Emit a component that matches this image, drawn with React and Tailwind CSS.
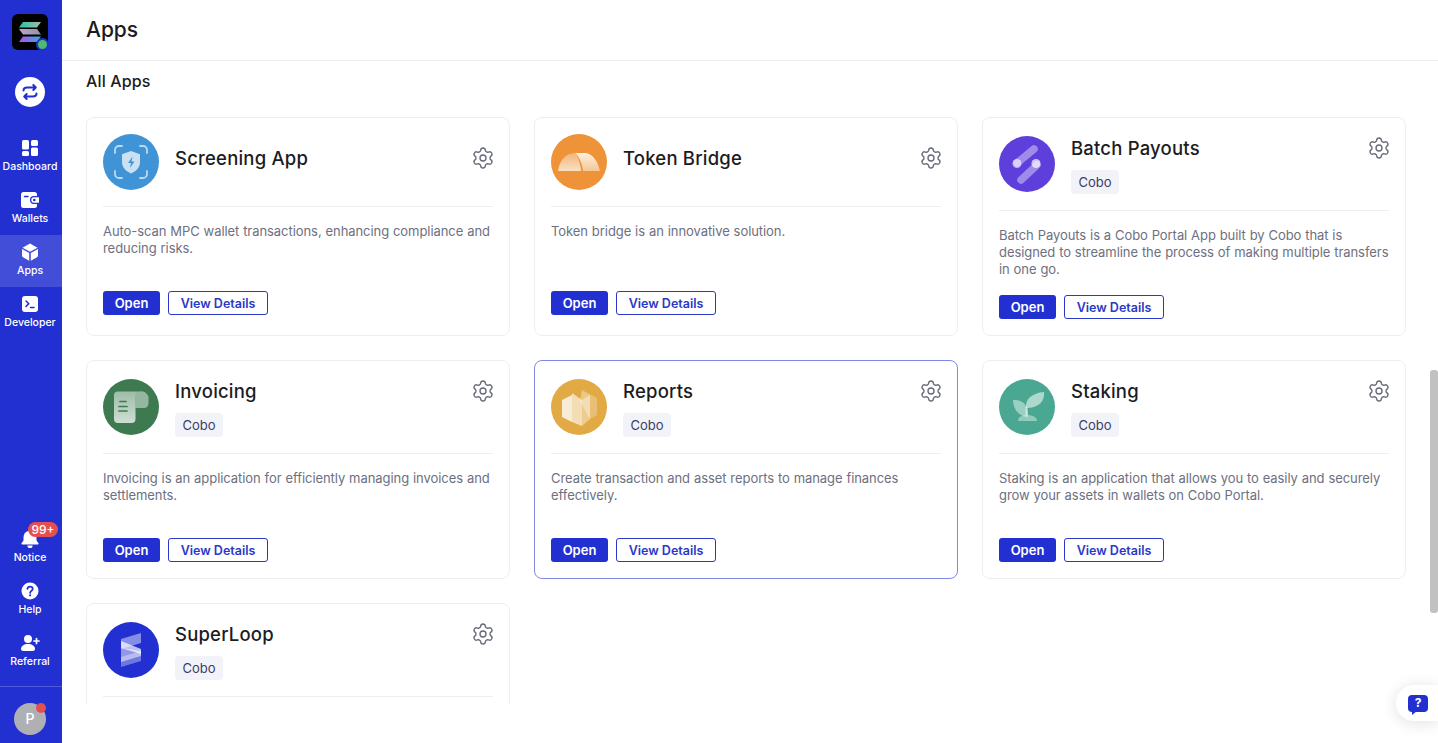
import React from "react";
import { Settings } from "lucide-react";

const Circle = ({ bg, children }) => (
  <div className={`w-14 h-14 rounded-full shrink-0 ${bg}`}>
    <svg viewBox="0 0 56 56" className="w-14 h-14" fill="none">{children}</svg>
  </div>
);

const ScreeningLogo = () => (
  <Circle bg="bg-[#4094d6]">
    <g stroke="#fff" strokeOpacity=".65" strokeWidth="1.8" strokeLinecap="round" fill="none">
      <path d="M12 19v-3a4 4 0 0 1 4-4h3" />
      <path d="M37 12h3a4 4 0 0 1 4 4v3" />
      <path d="M44 37v3a4 4 0 0 1-4 4h-3" />
      <path d="M19 44h-3a4 4 0 0 1-4-4v-3" />
    </g>
    <path d="M28 17l9 3.2v7.6c0 6-4 9.6-9 11.7-5-2.1-9-5.700-9-11.700v-7.600z" fill="#fff" fillOpacity=".72" />
    <path d="M29.500 22.500l-4.500 6.500h3l-1 5 4.500-6.500h-3z" fill="#4094d6" />
  </Circle>
);

const BridgeLogo = () => (
  <Circle bg="bg-[#ee9338]">
    <defs>
      <linearGradient id="br1" x1="0" y1="0" x2="0" y2="1">
        <stop offset="0" stopColor="#f4b47c" />
        <stop offset="1" stopColor="#fae0c2" />
      </linearGradient>
      <linearGradient id="br2" x1="0" y1="0" x2="0" y2="1">
        <stop offset="0" stopColor="#fdf0e0" />
        <stop offset="1" stopColor="#f6c794" />
      </linearGradient>
    </defs>
    <path d="M7 37C8 28 14 19 24 19c3 3 5.500 11 6 18z" fill="url(#br1)" />
    <path d="M24 19h11c7 1 12 9 14 18H32c-1-8-4-15-8-18z" fill="url(#br2)" />
  </Circle>
);

const BatchLogo = () => (
  <Circle bg="bg-[#5f3fdc]">
    <path d="M18 27L35 13" stroke="#fff" strokeOpacity=".4" strokeWidth="7.500" strokeLinecap="round" />
    <path d="M22 44L38 29" stroke="#fff" strokeOpacity=".4" strokeWidth="7.500" strokeLinecap="round" />
    <circle cx="18" cy="27.500" r="4.500" fill="#fff" fillOpacity=".6" />
    <circle cx="37" cy="27.500" r="4.500" fill="#fff" fillOpacity=".7" />
  </Circle>
);

const InvoiceLogo = () => (
  <Circle bg="bg-[#3e7a50]">
    <defs>
      <linearGradient id="inv" x1="0" y1="0" x2="0" y2="1">
        <stop offset="0" stopColor="#fff" stopOpacity=".5" />
        <stop offset="1" stopColor="#fff" stopOpacity=".75" />
      </linearGradient>
    </defs>
    <path d="M15 12.500h21c-3 1-3.500 3-3.500 6V40a4 4 0 0 1-4 4H15a4 4 0 0 1-4-4V16.500a4 4 0 0 1 4-4z" fill="url(#inv)" />
    <path d="M36 12.500a9 9 0 0 1 9.500 5v7a4.500 4.500 0 0 1-4.500 4.500h-8.500V18c0-3 1-4.500 3.500-5.500z" fill="#fff" fillOpacity=".45" />
    <path d="M17 22.500h6M16 27.500h8M16 32h8" stroke="#3e7a50" strokeWidth="1.700" strokeLinecap="round" />
  </Circle>
);

const ReportsLogo = () => (
  <Circle bg="bg-[#e2aa45]">
    <path d="M31 11l15 8v17l-7 4V16z" fill="#fff" fillOpacity=".25" />
    <path d="M29 22l2-11 8 5v24z" fill="#fff" fillOpacity=".35" />
    <path d="M21 14l10 7v26l-10-4z" fill="#fff" fillOpacity=".6" />
    <path d="M31 21l8-5v24l-8 7z" fill="#fff" fillOpacity=".4" />
    <path d="M11 21l10-5v27l-10-5z" fill="#fff" fillOpacity=".78" />
  </Circle>
);

const StakingLogo = () => (
  <Circle bg="bg-[#4aa892]">
    <path d="M27 29c-1-9 6-15 18-16 1 9-5 16-18 16z" fill="#fff" fillOpacity=".55" />
    <path d="M29 38c1-10-4-18-15-17 0 9 6 17 15 17z" fill="#fff" fillOpacity=".45" />
    <path d="M27.500 28v8" stroke="#fff" strokeOpacity=".5" strokeWidth="2" />
    <path d="M19 42c0-4 4-6 9-6s10 2 10 6z" fill="#fff" fillOpacity=".4" />
  </Circle>
);

const LoopLogo = () => (
  <Circle bg="bg-[#2230d2]">
    <path d="M18 17l20-6v10L18 27z" fill="#fff" fillOpacity=".45" />
    <path d="M18 19l20 8v5L18 26z" fill="#fff" fillOpacity=".7" />
    <path d="M18 26l20 3v5L18 40z" fill="#fff" fillOpacity=".5" />
    <path d="M18 35l20-6v10l-20 6z" fill="#fff" fillOpacity=".35" />
  </Circle>
);

const apps = [
  { name: "Screening App", logo: ScreeningLogo, desc: "Auto-scan MPC wallet transactions, enhancing compliance and reducing risks." },
  { name: "Token Bridge", logo: BridgeLogo, desc: "Token bridge is an innovative solution." },
  { name: "Batch Payouts", logo: BatchLogo, tag: true, desc: "Batch Payouts is a Cobo Portal App built by Cobo that is designed to streamline the process of making multiple transfers in one go." },
  { name: "Invoicing", logo: InvoiceLogo, tag: true, desc: "Invoicing is an application for efficiently managing invoices and settlements." },
  { name: "Reports", logo: ReportsLogo, tag: true, hover: true, desc: "Create transaction and asset reports to manage finances effectively." },
  { name: "Staking", logo: StakingLogo, tag: true, desc: "Staking is an application that allows you to easily and securely grow your assets in wallets on Cobo Portal." },
  { name: "SuperLoop", logo: LoopLogo, tag: true, clipped: true },
];

const Card = ({ app }) => {
  const Logo = app.logo;
  return (
    <div className={`min-h-[219px] rounded-lg border bg-white px-4 pt-4 pb-4 ${app.hover ? "border-[#8089e2]" : "border-[#eceef2]"}`}>
      <div className="flex items-center gap-4 border-b border-[#eceef2] pb-4">
        <Logo />
        <div className="flex-1 min-w-0">
          <div className="flex h-7 items-center justify-between mb-2">
            <span className="text-[18.500px] font-medium leading-7 text-[#1b1c21] tracking-[0.2px]">{app.name}</span>
            <Settings size={24} strokeWidth={1.35} className="-mr-[2px] text-[#666a79]" />
          </div>
          {app.tag && (
            <span className="flex h-6 w-12 items-center justify-center rounded bg-[#f2f3f8] pt-px text-[13px] text-[#3a3d68]">Cobo</span>
          )}
        </div>
      </div>
      {!app.clipped && (
        <>
          <p className="mt-4 h-[51px] text-[13px] leading-[17px] tracking-[-0.06px] [word-spacing:0.3px] text-[#6d7080]">{app.desc}</p>
          <div className="mt-[17px] flex gap-2">
            <button className="h-6 w-[57px] rounded-[3px] bg-[#2230d2] pt-px text-[13px] font-semibold text-white">Open</button>
            <button className="h-6 w-[100px] rounded-[3px] border border-[#2a38c8] bg-white pt-[2px] text-[12.500px] font-semibold leading-4 text-[#2a38c8]">View Details</button>
          </div>
        </>
      )}
    </div>
  );
};

const NavItem = ({ label, icon, active }) => (
  <div className={`flex h-[52px] flex-col items-center pr-[2px] pt-[7px] ${active ? "bg-white/15" : ""}`}>
    <div className="h-5 w-5">{icon}</div>
    <span className="mt-px text-[10.500px] font-medium leading-4 text-white whitespace-nowrap">{label}</span>
  </div>
);

const I = ({ children }) => <svg viewBox="0 0 20 20" className="h-5 w-5">{children}</svg>;

const icons = {
  dash: (
    <I>
      <rect x="2" y="2" width="7" height="9.500" rx="1.500" fill="#fff" />
      <rect x="11" y="2" width="7" height="6" rx="1.500" fill="#fff" />
      <rect x="2" y="13" width="7" height="5" rx="1.500" fill="#fff" />
      <rect x="11" y="9.500" width="7" height="8.500" rx="1.500" fill="#fff" />
    </I>
  ),
  wallet: (
    <I>
      <path d="M3.500 2h11A2.500 2.500 0 0 1 17 4.500V6h-3a4 4 0 0 0 0 8h3v1.500a2.500 2.500 0 0 1-2.500 2.500h-11A2.500 2.500 0 0 1 1 15.500v-11A2.500 2.500 0 0 1 3.500 2z" fill="#fff" />
      <path d="M14 7.300h5v5.400h-5a2.700 2.700 0 0 1 0-5.400z" fill="#fff" />
      <circle cx="14.300" cy="10" r="1.300" fill="#2230d2" />
      <path d="M4.500 6.500h3.500" stroke="#2230d2" strokeWidth="1.400" strokeLinecap="round" />
    </I>
  ),
  apps: (
    <I>
      <path d="M10 1.500l7.500 4.200L10 9.800 2.500 5.700z" fill="#fff" />
      <path d="M2 7l7.200 4v7.800L3 15.200A2 2 0 0 1 2 13.500z" fill="#fff" />
      <path d="M18 7l-7.200 4v7.800l6.200-3.600a2 2 0 0 0 1-1.700z" fill="#fff" />
    </I>
  ),
  dev: (
    <I>
      <rect x="2" y="2" width="16" height="16" rx="3" fill="#fff" />
      <path d="M6 7l2.800 2.700L6 12.400" stroke="#2230d2" strokeWidth="1.500" fill="none" strokeLinecap="round" strokeLinejoin="round" />
      <path d="M10.500 13.500h3.500" stroke="#2230d2" strokeWidth="1.500" strokeLinecap="round" />
    </I>
  ),
  bell: (
    <I>
      <path d="M10 0.500c1 0 1.600.7 1.600 1.500 3.200.7 4.900 3.300 4.900 6.500v3l2 2.800c.4.600 0 1.200-.7 1.200H2.200c-.7 0-1.100-.6-.7-1.200l2-2.800v-3c0-3.200 1.700-5.800 4.900-6.500 0-.8.600-1.500 1.600-1.500z" fill="#fff" />
      <path d="M7.400 16.500h5.200a2.600 2.600 0 0 1-5.200 0z" fill="#fff" />
    </I>
  ),
  help: (
    <I>
      <circle cx="10" cy="10" r="8.500" fill="#fff" />
      <path d="M7.400 7.800A2.700 2.700 0 0 1 10 5.600c1.500 0 2.700 1 2.700 2.300 0 1.900-2.500 2-2.600 4" stroke="#2230d2" strokeWidth="1.800" fill="none" strokeLinecap="round" />
      <circle cx="10.100" cy="14.300" r="1.100" fill="#2230d2" />
    </I>
  ),
  ref: (
    <I>
      <circle cx="8" cy="6" r="4" fill="#fff" />
      <path d="M1 16c0-3 3-5 7-5s7 2 7 5c0 1.200-1 2-2.200 2H3.200C2 18 1 17.200 1 16z" fill="#fff" />
      <path d="M16.500 5.500v5M14 8h5" stroke="#fff" strokeWidth="1.700" strokeLinecap="round" />
    </I>
  ),
};

const Sidebar = () => (
  <aside className="flex h-[743px] w-[62px] shrink-0 flex-col bg-[#2230d2]">
    <div className="relative ml-3 mt-[14px] h-9 w-9 rounded-md bg-black">
      <svg viewBox="0 0 36 36" className="h-9 w-9">
        <defs>
          <linearGradient id="solTop" x1="0" y1="0" x2="1" y2="0">
            <stop offset="0" stopColor="#1fc9a0" />
            <stop offset="1" stopColor="#a6b8a8" />
          </linearGradient>
          <linearGradient id="solMid" x1="0" y1="0" x2="1" y2="0">
            <stop offset="0" stopColor="#b9a7c9" />
            <stop offset="1" stopColor="#8f93a8" />
          </linearGradient>
          <linearGradient id="solBot" x1="0" y1="0" x2="1" y2="0">
            <stop offset="0" stopColor="#a855f0" />
            <stop offset="1" stopColor="#3fa7d8" />
          </linearGradient>
        </defs>
        <path d="M11 8h18l-4 5.500H7z" fill="url(#solTop)" />
        <path d="M7 15h18l4 5.500H11z" fill="url(#solMid)" />
        <path d="M11 22.500h18L25 28H7z" fill="url(#solBot)" />
      </svg>
      <span className="absolute -right-[1px] -bottom-[1px] h-[13px] w-[13px] rounded-full border-2 border-[#2230d2] bg-[#4cbb6c]" />
    </div>
    <div className="ml-[15px] mt-[27px] flex h-[30px] w-[30px] items-center justify-center rounded-full bg-white">
      <svg viewBox="0 0 20 20" className="h-5 w-5" fill="none" stroke="#2230d2" strokeWidth="2" strokeLinecap="round" strokeLinejoin="round">
        <path d="M3.500 8.500C3.500 6.500 5 5.500 7 5.500h8.500M13.300 3l2.500 2.500L13.300 8" />
        <path d="M16.500 11.500c0 2-1.500 3-3.500 3H4.500M6.700 12l-2.500 2.500L6.700 17" />
      </svg>
    </div>
    <nav className="mt-6 flex flex-col">
      <NavItem label="Dashboard" icon={icons.dash} />
      <NavItem label="Wallets" icon={icons.wallet} />
      <NavItem label="Apps" icon={icons.apps} active />
      <NavItem label="Developer" icon={icons.dev} />
    </nav>
    <div className="flex-1" />
    <div className="flex flex-col">
      <div className="relative">
        <NavItem label="Notice" icon={icons.bell} />
        <span className="absolute left-[28px] top-0 flex h-[15px] w-[30px] items-center justify-center rounded-full bg-[#e2504f] text-[12px] font-medium text-white">99+</span>
      </div>
      <NavItem label="Help" icon={icons.help} />
      <NavItem label="Referral" icon={icons.ref} />
    </div>
    <div className="mt-2 flex h-[57px] items-start border-t border-white/20 pl-[14px] pt-4">
      <div className="relative flex h-8 w-8 items-center justify-center rounded-full bg-[#afb0b6] text-sm font-medium text-white">
        P
        <span className="absolute right-0 top-0 h-[10px] w-[10px] rounded-full bg-[#e2504f]" />
      </div>
    </div>
  </aside>
);

export default function App() {
  return (
    <div className="relative flex h-[743px] w-[1438px] overflow-hidden bg-white font-['Inter',sans-serif]">
      <Sidebar />
      <main className="flex-1 min-w-0">
        <header className="flex h-[61px] items-center border-b border-[#eceef2] px-6">
          <h1 className="text-[21px] font-medium text-[#1b1c21]">Apps</h1>
        </header>
        <div className="h-[643px] overflow-hidden pl-6 pr-8 pt-2">
          <h2 className="mb-6 text-base font-medium leading-6 tracking-[0.15px] text-[#1b1c21]">All Apps</h2>
          <div className="grid grid-cols-3 gap-6">
            {apps.map((a) => (
              <Card key={a.name} app={a} />
            ))}
          </div>
        </div>
      </main>
      <div className="absolute right-0 top-[370px] h-[243px] w-2 rounded-[3px] bg-[#c1c1c1]" />
      <div className="absolute right-0 top-[685px] flex h-9 w-[42px] items-center rounded-l-[18px] bg-white pl-3 shadow-[0_2px_16px_rgba(0,0,0,0.12)]">
        <div className="relative flex h-[17px] w-5 items-center justify-center rounded bg-[#2230d2] text-[12px] font-bold text-white">
          ?
          <span className="absolute -bottom-[3px] left-1 h-0 w-0 border-r-[5px] border-t-[4px] border-r-transparent border-t-[#2230d2]" />
        </div>
      </div>
    </div>
  );
}
